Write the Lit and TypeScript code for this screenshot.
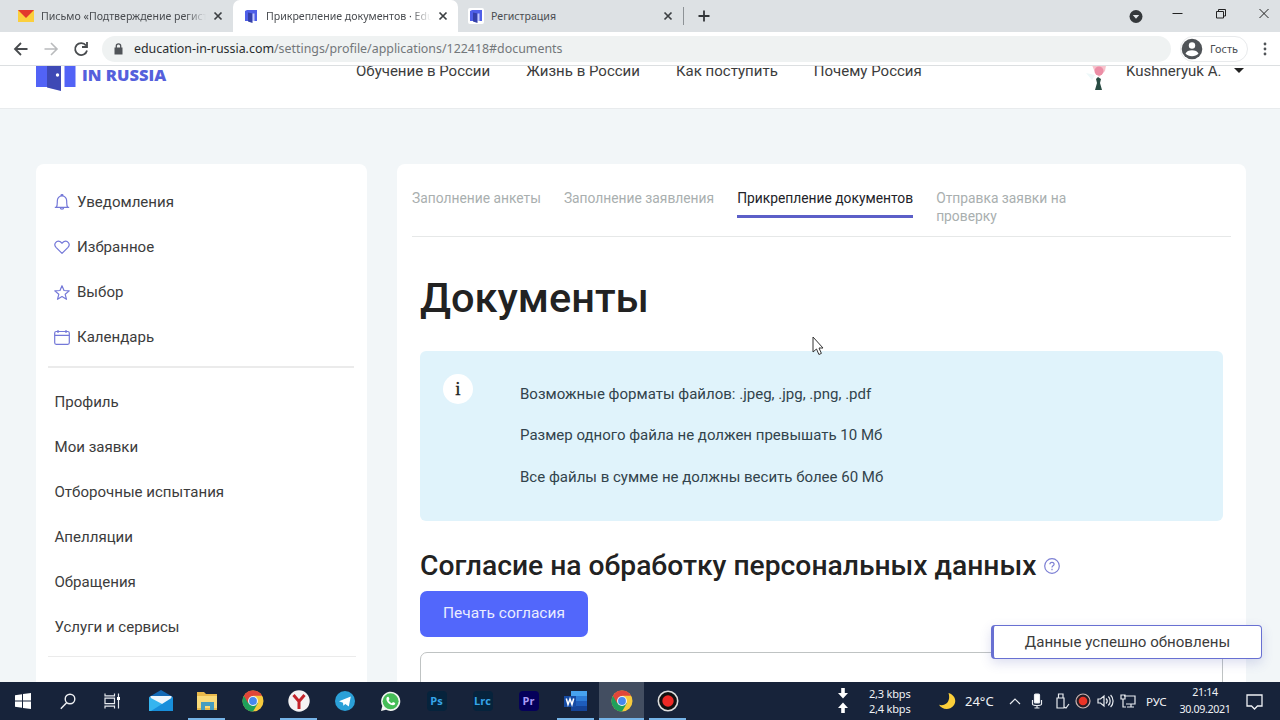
import { LitElement, html, css, svg } from "lit";
import { customElement } from "lit/decorators.js";

const cross = html`<svg class="x" viewBox="0 0 10 10" width="10" height="10"><path d="M1.5 1.5l7 7M8.5 1.5l-7 7" stroke="#3c4043" stroke-width="1.7"/></svg>`;
const doorIcon = html`<svg width="16" height="16" viewBox="0 0 16 16"><rect width="16" height="16" rx="2" fill="#fff"/><path d="M2 3l2-1h10v11H2z" fill="#4f5fe8"/><path d="M5 4.500l4.500 1V15L5 13.500z" fill="#3440a8"/><path d="M9.500 5.500h2V13h-2z" fill="#c4cafc"/></svg>`;
const chromeIcon = html`<svg width="22" height="22" viewBox="0 0 22 22"><circle cx="11" cy="11" r="10.500" fill="#f7ca3d"/><path d="M11 11L1.900 5.750A10.500 10.500 0 0 0 11 21.500l5-8.500z" fill="#1fa05a"/><path d="M1.900 5.750A10.500 10.500 0 0 1 20.100 5.800H11L6.200 13.300z" fill="#e0463a"/><circle cx="11" cy="11" r="5" fill="#f3f3f3"/><circle cx="11" cy="11" r="3.900" fill="#4688ee"/></svg>`;

const menuIcons = [
  svg`<path d="M.8 13.300h14.400M2.300 13.300c1.200-1.500 1-3.800 1-6.300C3.300 4 5.200 1.800 8 1.800S12.700 4 12.700 7c0 2.500-.2 4.800 1 6.300M6.300 13.500c0 2.200 3.400 2.200 3.400 0M7 1.500c0-1.300 2-1.300 2 0"/>`,
  svg`<path d="M8 14.300L2 8.300C-1 5 2.600.8 6.400 2.800L8 4.200l1.600-1.400C13.400.8 17 5 14 8.300z"/>`,
  svg`<path d="M8 1.700l2 4.800 5.200.4-4 3.400 1.300 5L8 12.600l-4.500 2.700 1.300-5-4-3.400L6 6.500z"/>`,
  svg`<rect x=".7" y="2.500" width="14.600" height="12.800" rx="1.500"/><path d="M.7 6.300h14.600M4 .9v3M12 .9v3"/>`,
];

const app = (name: string, kind: string) => html`<span class="adobe ${kind}">${name}</span>`;

@customElement("site-page")
export class SitePage extends LitElement {
  static styles = css`
    :host { display: flex; flex-direction: column; position: relative; flex: 1; min-height: 0; overflow: hidden; background: #f2f6f8; font-family: Roboto, sans-serif; color: #3c3c3c; }
    .head { height: 75px; margin-top: -33px; flex: none; background: #fff; border-bottom: 1px solid #e8ebed; display: flex; align-items: center; }
    .logo { display: flex; width: 320px; padding-left: 36px; box-sizing: border-box; align-items: center; gap: 6px; font: 800 16.500px/18px "Open Sans", sans-serif; color: #5560dc; }
    .word { padding-top: 9px; }
    nav { display: flex; width: 770px; gap: 36px; padding-left: 36px; box-sizing: border-box; font-size: 15.020px; white-space: nowrap; }
    .user { display: flex; align-items: center; font-size: 15px; gap: 13px; white-space: nowrap; }
    .rose { margin-left: -5px; }
    .cols { display: flex; gap: 30px; padding: 55px 34px 0 36px; height: 600px; }
    .side { width: 331px; background: #fff; border-radius: 8px; box-sizing: border-box; padding: 15px 11px 0 12px; flex: none; }
    .row { display: flex; align-items: center; height: 45px; padding-left: 6.500px; gap: 7px; font-size: 15.060px; }
    .row svg { fill: none; stroke: #7478d8; stroke-width: 1.200; stroke-linejoin: round; margin-left: -.5px; }
    .rule { height: 2px; background: #ebebeb; margin: 7px 2px 11px 0; }
    .thin { height: 1px; margin: 7px 0 0; }
    .main { width: 849px; background: #fff; border-radius: 8px; box-sizing: border-box; padding: 25px 15px 0; }
    .steps { display: flex; height: 47px; gap: 23px; border-bottom: 1px solid #e6e8e8; font-size: 13.820px; line-height: 18px; color: #a9afaf; white-space: nowrap; }
    .on { color: #222228; border-bottom: 3px solid #5c5fc8; height: 26px; }
    .body { padding: 0 8px; }
    h1 { margin: 37px 0 29px; font-size: 41.500px; line-height: 48px; font-weight: 500; color: #222; }
    .info { height: 170px; box-sizing: border-box; background: #e0f3fb; border-radius: 6px; padding: 23px 23px; display: flex; gap: 47px; font-size: 15.030px; line-height: 41.300px; color: #32434c; }
    .i { width: 30px; height: 30px; border-radius: 50%; background: #fff; font: 400 19px/30px "Liberation Serif", serif; -webkit-text-stroke: .3px #222; text-align: center; color: #222; }
    h2 { margin: 28px 0 8px; font-size: 28.250px; line-height: 34px; font-weight: 500; color: #222; display: flex; align-items: center; gap: 8px; white-space: nowrap; }
    .btn { width: 168px; height: 46px; border-radius: 7px; background: #5267fb; color: #e9ecff; font-size: 15.500px; line-height: 45px; text-align: center; }
    .drop { height: 60px; margin-top: 15px; border: 1px solid #bfc3c3; border-radius: 7px; }
    .toast { position: absolute; left: 991px; top: 559px; width: 271px; height: 34px; box-sizing: border-box; border: 1px solid #6870d2; border-left-width: 3px; border-radius: 4px; background: #fff; box-shadow: 0 4px 12px rgba(80,90,180,.2); text-align: center; line-height: 32px; font-size: 15.100px; }
    .cursor { position: absolute; left: 811px; top: 270px; }
  `;
  render() {
    return html`
      <div class="head">
        <div class="logo">
          <svg width="40" height="42" viewBox="0 0 40 42"><path d="M0 4h14v33H0zM28.500 4h11v33h-11z" fill="#5263f6"/><path d="M11 4h14v37l-14-3.500z" fill="#3e49b5"/><circle cx="21.500" cy="25" r="1.700" fill="#fff"/></svg>
          <span class="word">IN RUSSIA</span>
        </div>
        <nav><span>Обучение в России</span><span>Жизнь в России</span><span>Как поступить</span><span>Почему Россия</span></nav>
        <div class="user">
          <svg class="rose" width="28" height="40" viewBox="0 0 28 40"><path d="M1 22l9 2-3 5z" fill="#edf8f9"/><path d="M5 9h17l-2 11-6 6-5-7z" fill="#f7c3cc"/><circle cx="14" cy="20" r="4.500" fill="#ec8ea6"/><path d="M11 28l2-2 3 2-1 4 2 7h-7l2-7z" fill="#294c43"/></svg>
          <span>Kushneryuk A.</span>
          <svg width="10" height="5" viewBox="0 0 10 5"><path d="M0 0h10L5 5z" fill="#222"/></svg>
        </div>
      </div>
      <div class="cols">
        <div class="side">
          ${["Уведомления", "Избранное", "Выбор", "Календарь"].map((t, k) => html`<div class="row"><svg width="16" height="16" viewBox="0 0 16 16">${menuIcons[k]}</svg><span>${t}</span></div>`)}
          <div class="rule"></div>
          ${["Профиль", "Мои заявки", "Отборочные испытания", "Апелляции", "Обращения", "Услуги и сервисы"].map((t) => html`<div class="row"><span>${t}</span></div>`)}
          <div class="rule thin"></div>
        </div>
        <div class="main">
          <div class="steps"><span>Заполнение анкеты</span><span>Заполнение заявления</span><span class="on">Прикрепление документов</span><span>Отправка заявки на<br>проверку</span></div>
          <div class="body">
            <h1>Документы</h1>
            <div class="info">
              <div class="i">i</div>
              <div><div>Возможные форматы файлов: .jpeg, .jpg, .png, .pdf</div><div>Размер одного файла не должен превышать 10 Мб</div><div>Все файлы в сумме не должны весить более 60 Мб</div></div>
            </div>
            <h2><span>Согласие на обработку персональных данных</span>
              <svg width="16" height="16" viewBox="0 0 16 16" fill="none" stroke="#7c7fd4" stroke-width="1.200"><circle cx="8" cy="8" r="7.300"/><path d="M5.900 6.300c0-2.600 4.200-2.600 4.200 0 0 1.600-2.100 1.500-2.100 3.200M8 10.800v1.400"/></svg></h2>
            <div class="btn">Печать согласия</div>
            <div class="drop"></div>
          </div>
        </div>
      </div>
      <div class="toast">Данные успешно обновлены</div>
      <svg class="cursor" width="14" height="20" viewBox="0 0 14 20"><path d="M2 1v15l3.500-3 2.400 5.500 2.500-1.100L8 12h4z" fill="#fff" stroke="#333"/></svg>
    `;
  }
}

@customElement("browser-chrome")
export class BrowserChrome extends LitElement {
  static styles = css`
    :host { display: block; flex: none; font-family: "Noto Sans", sans-serif; color: #494c50; }
    .tabs { height: 32px; background: #dde1e4; display: flex; align-items: center; font-size: 10.600px; }
    .tab { display: flex; align-items: center; height: 32px; box-sizing: border-box; padding: 0 10px 0 18px; gap: 7px; width: 233px; }
    .t { flex: 1; overflow: hidden; white-space: nowrap; -webkit-mask-image: linear-gradient(90deg, #000 88%, transparent); }
    .full { -webkit-mask-image: none; }
    .on { width: 225px; background: #fff; border-radius: 7px 7px 0 0; padding: 0 10px 0 10px; }
    .third { width: 225px; padding: 0 10px 0 10px; }
    .sep { width: 1px; height: 18px; background: #8d9296; margin: 0 14px 0 0; }
    .win { margin: -2px 7px 0 auto; }
    .bar { height: 33px; background: #fff; display: flex; align-items: center; border-bottom: 1px solid #dcdfe1; }
    .nav { display: flex; width: 102px; gap: 14px; padding-left: 13px; box-sizing: border-box; flex: none; }
    .url { width: 1069px; height: 26px; border-radius: 13px; background: #eff2f2; display: flex; align-items: center; padding-left: 12px; gap: 11px; box-sizing: border-box; font-size: 12.400px; color: #73777a; }
    .url b { font-weight: 400; color: #292c2f; }
    .guest { display: flex; align-items: center; gap: 7px; width: 68px; height: 26px; box-sizing: border-box; border: 1px solid #e8eaec; border-radius: 13px; margin-left: 9px; padding-left: 0; font-size: 10.900px; }
    .dots { margin-left: 15px; }
    svg { flex: none; }
  `;
  render() {
    return html`
      <div class="tabs">
        <div class="tab"><svg width="16" height="12" viewBox="0 0 16 12"><path d="M0 0h16v12H0z" fill="#fbcf3d"/><path d="M0 0h16L8 8z" fill="#e3392d"/></svg><span class="t">Письмо «Подтверждение регистрации»</span>${cross}</div>
        <div class="tab on">${doorIcon}<span class="t">Прикрепление документов · Education</span>${cross}</div>
        <div class="tab third">${doorIcon}<span class="t full">Регистрация</span>${cross}</div>
        <div class="sep"></div>
        <svg width="12" height="12" viewBox="0 0 12 12"><path d="M6 .5v11M.5 6h11" stroke="#333639" stroke-width="1.800"/></svg>
        <svg class="win" width="144" height="22" viewBox="0 0 144 22" fill="none" stroke="#222"><circle cx="7" cy="12.500" r="6.500" fill="#34383b" stroke="none"/><path d="M3.800 11h6.400L7 14.800z" fill="#e1e4e7" stroke="none"/><path d="M43.500 9.500h10M87.500 7.500h7v6.500h-7zM89.500 7.500v-2h7v6.500h-2M130.500 5l9 9M139.500 5l-9 9"/></svg>
      </div>
      <div class="bar">
        <div class="nav">
          <svg width="16" height="16" viewBox="0 0 16 16" fill="none" stroke="#484b4e" stroke-width="1.800"><path d="M14.500 8H2M8 2L2 8l6 6"/></svg>
          <svg width="16" height="16" viewBox="0 0 16 16" fill="none" stroke="#b9bbbd" stroke-width="1.600"><path d="M1.500 8H14M8 2l6 6-6 6"/></svg>
          <svg width="16" height="16" viewBox="0 0 16 16" fill="none" stroke="#484b4e" stroke-width="1.800"><path d="M13 4.500A6 6 0 1 0 14 9.500M14 1v5H9"/></svg>
        </div>
        <div class="url"><svg width="9" height="12" viewBox="0 0 9 12"><path d="M.5 4.500h8v7h-8z" fill="#505458"/><path d="M2.300 5V3a2.200 2.200 0 0 1 4.400 0v2" fill="none" stroke="#505458" stroke-width="1.300"/></svg><span><b>education-in-russia.com</b>/settings/profile/applications/122418#documents</span></div>
        <div class="guest"><svg width="22" height="22" viewBox="0 0 22 22"><circle cx="11" cy="11" r="10.300" fill="#4f5357"/><circle cx="11" cy="7.500" r="3.200" fill="#fff"/><path d="M4.500 15.500c1.500-4.500 11.500-4.500 13 0-3 3.600-10 3.600-13 0z" fill="#fff"/></svg><span>Гость</span></div>
        <svg class="dots" width="4" height="14" viewBox="0 0 4 14" fill="#505458"><circle cx="2" cy="2" r="1.400"/><circle cx="2" cy="7" r="1.400"/><circle cx="2" cy="12" r="1.400"/></svg>
      </div>
    `;
  }
}

@customElement("task-bar")
export class TaskBar extends LitElement {
  static styles = css`
    :host { display: flex; flex: none; height: 38px; background: #17233a; color: #f0f2f5; font-family: "Noto Sans", sans-serif; font-size: 11px; }
    .sys { display: flex; width: 138px; flex: none; }
    .sys span { width: 45px; display: flex; align-items: center; justify-content: center; }
    .slots { display: flex; }
    .slot { width: 45px; margin-right: 1px; display: flex; align-items: center; justify-content: center; box-sizing: border-box; border-bottom: 2px solid transparent; padding-top: 2px; flex: none; }
    .run { background: linear-gradient(#76b4e8, #76b4e8) 50% 100% / 37px 2px no-repeat border-box; }
    .shift { margin-left: 1px; }
    .act { background: #434e61; border-bottom-color: #76b4e8; }
    .adobe { width: 20px; height: 20px; border-radius: 4px; font: 700 11px/20px "Open Sans", sans-serif; text-align: center; color: #36a5e8; background: #06233c; }
    .violet { color: #a99bf8; background: #05005a; }
    .tray { margin-left: auto; width: 444px; display: flex; align-items: center; }
    .arrows { margin-left: 1px; }
    .net { width: 42px; margin-left: 20px; line-height: 15px; font-size: 11px; white-space: nowrap; letter-spacing: -.2px; }
    .temp { font-size: 13px; margin-left: 9px; width: 44px; white-space: nowrap; }
    .lang { width: 26px; font-size: 11.500px; margin-left: 3px; }
    .time { width: 60px; text-align: center; line-height: 17px; margin-left: 3px; font-size: 10.700px; letter-spacing: -.35px; white-space: nowrap; }
    svg { flex: none; }
    .moon { margin-left: 27px; }
    .note { margin-left: 11px; }
  `;
  render() {
    const icons = [
      ["", html`<svg width="24" height="22" viewBox="0 0 24 22"><path d="M0 7L12 0l12 7v14H0z" fill="#1269b5"/><path d="M1.500 6h21v14h-21z" fill="#eef6fc"/><path d="M0 7l15 8-11 6H0z" fill="#35b5ef"/><path d="M24 7v14H2z" fill="#188fdb"/></svg>`],
      ["run", html`<svg width="22" height="20" viewBox="0 0 22 20"><path d="M1 1h7l2 2h11v16H1z" fill="#e9b94b"/><path d="M1 5h20v12H1z" fill="#f9da79"/><path d="M5 11h13v8h-4v-4H9v4H5z" fill="#459dc0"/></svg>`],
      ["", chromeIcon],
      ["run", html`<svg width="22" height="22" viewBox="0 0 22 22"><circle cx="11" cy="11" r="10.700" fill="#f4f3f4"/><path d="M5.500 5l5.500 6.500L16.500 5M11 11v8" fill="none" stroke="#c3242b" stroke-width="3"/></svg>`],
      ["", html`<svg width="20" height="20" viewBox="0 0 20 20"><circle cx="10" cy="10" r="10" fill="#2ba0d8"/><path d="M4 10.200L15.800 5.500l-2 10-3.500-2.600-1.900 1.900-.4-3z" fill="#fff"/></svg>`],
      ["", html`<svg width="21" height="21" viewBox="0 0 21 21"><path d="M1 20l1.300-5A9.600 9.600 0 1 1 6 18.700z" fill="#f2f6f2"/><circle cx="10.600" cy="10.300" r="8" fill="#45bd57"/><path d="M7 6l1.500-.2 1 2.300-.9 1.200c.8 1.500 1.800 2.300 3.200 2.900l1.200-1.200 2.200 1.100c0 2.100-2 2.700-4.300 1.700-2.600-1.100-5.900-4.800-3.900-7.800z" fill="#fff"/></svg>`],
      ["", app("Ps", "")],
      ["", app("Lrc", "")],
      ["", app("Pr", "violet")],
      ["run shift", html`<svg width="23" height="20" viewBox="0 0 23 20"><path d="M7 0h16v5H7z" fill="#47a2ee"/><path d="M7 5h16v5H7z" fill="#2e7dd7"/><path d="M7 10h16v5H7z" fill="#1e5dbb"/><path d="M7 15h16v5H7z" fill="#154497"/><path d="M0 5h12v11H0z" fill="#164ba4"/><path d="M2.300 7.500l1.700 6 2-5.500 2 5.500 1.700-6" fill="none" stroke="#fff" stroke-width="1.500"/></svg>`],
      ["act", chromeIcon],
      ["run", html`<svg width="22" height="22" viewBox="0 0 22 22"><circle cx="11" cy="11" r="9.700" fill="#111" stroke="#ddd" stroke-width="1.600"/><circle cx="11" cy="11" r="5.700" fill="#ee2925"/></svg>`],
    ];
    return html`
      <div class="sys">
        <span><svg width="16" height="16" viewBox="0 0 16 16" fill="#fff"><path d="M0 2.200l7-1v6.300H0zM8 1l8-1v7.500H8zM0 8.500h7v6.300l-7-1zM8 8.500h8V16l-8-1z"/></svg></span>
        <span><svg width="16" height="17" viewBox="0 0 16 17" fill="none" stroke="#eef0f3" stroke-width="1.400"><circle cx="10" cy="6" r="4.800"/><path d="M6.600 9.800L.8 15.800"/></svg></span>
        <span><svg width="17" height="16" viewBox="0 0 17 16" fill="none" stroke="#e7eaef" stroke-width="1.200"><path d="M1 .5v2.300h9.500V.5M1 5.200h9.500v5.500H1zM1 15.500v-2.300h9.500v2.300M14.500.5v15"/><path d="M13 4h3v3h-3z" fill="#fff" stroke="none"/></svg></span>
      </div>
      <div class="slots">${icons.map(([c, i]) => html`<div class="slot ${c}">${i}</div>`)}</div>
      <div class="tray">
        <svg class="arrows" width="12" height="28" viewBox="0 0 12 28" fill="#fff"><path d="M4.200 1h3.600v5H11l-5 5.500L1 6h3.200zM4.200 26h3.600v-5H11l-5-5.500L1 21h3.200z"/></svg>
        <div class="net">2,3 kbps<br>2,4 kbps</div>
        <svg class="moon" width="18" height="18" viewBox="0 0 18 18"><path d="M10.500 1c8 2 9.300 12 1.800 15.300C8 18 3 16.500 1 12.800 8 14.600 13 9 10.500 1z" fill="#fbcf3a"/></svg>
        <div class="temp">24°C</div>
        <svg width="134" height="20" viewBox="0 0 134 20" fill="none" stroke="#e8ebf0" stroke-width="1.200">
          <path d="M1 13l5-5 5 5"/>
          <rect x="25.500" y="3" width="5" height="9" rx="1" fill="#fff"/><path d="M23.500 9v4c0 2 9 2 9 0V9M28 14v3M25.500 17h5"/>
          <path d="M48 7h7v10h-7zM49.500 7V3h4.500v4M60 13l-3 4-2-1"/>
          <circle cx="74" cy="10" r="7" fill="#291d25" stroke="#c9b6b2"/><circle cx="74" cy="10" r="4.300" fill="#ec3426" stroke="none"/>
          <path d="M89 8h2.500l3.500-3v10l-3.500-3H89zM97 7.500c1.500 1.500 1.500 3.500 0 5M99.300 5.500c2.500 2.500 2.500 6.500 0 9M101.600 4c3.300 3.300 3.300 9 0 12"/>
          <path d="M115 5h11v8h-9M122 13v3M118 16h7M112 4h4v4h-4zM114 8v8h3"/>
        </svg>
        <div class="lang">РУС</div>
        <div class="time">21:14<br>30.09.2021</div>
        <svg class="note" width="17" height="17" viewBox="0 0 17 17" fill="none" stroke="#eef0f4" stroke-width="1.300"><path d="M1 2h15v11h-4.500l-3 3-3-3H1z"/></svg>
      </div>
    `;
  }
}

@customElement("app-root")
export class AppRoot extends LitElement {
  static styles = css`
    :host { display: flex; flex-direction: column; width: 1280px; height: 720px; overflow: hidden; }
  `;
  render() {
    return html`<browser-chrome></browser-chrome><site-page></site-page><task-bar></task-bar>`;
  }
}
